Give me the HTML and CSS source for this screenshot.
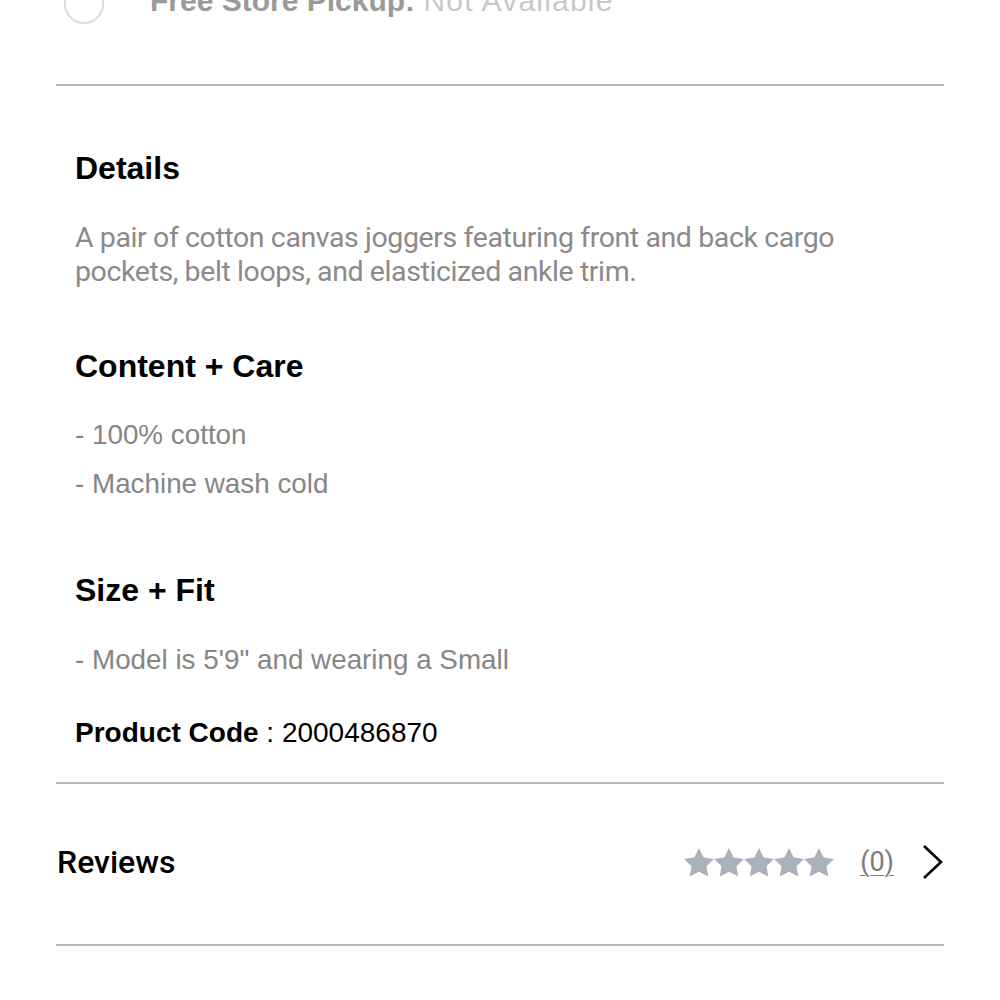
FILE: index.html
```html
<!DOCTYPE html>
<html lang="en">
<head>
<meta charset="utf-8">
<title>Product details</title>
<link rel="stylesheet" href="styles.css">
</head>
<body>
<div class="page">
  <div class="pickup">
    <span class="radio"></span>
    <span class="pickup-text"><b>Free Store Pickup:</b> <span class="na">Not Available</span></span>
  </div>
  <div class="rule rule-top"></div>

  <section class="details">
    <h2 class="heading h-details">Details</h2>
    <p class="desc">A pair of cotton canvas joggers featuring front and back cargo pockets, belt loops, and elasticized ankle trim.</p>

    <h2 class="heading h-care">Content + Care</h2>
    <ul class="bullets b-care">
      <li>- 100% cotton</li>
      <li>- Machine wash cold</li>
    </ul>

    <h2 class="heading h-fit">Size + Fit</h2>
    <ul class="bullets b-fit">
      <li>- Model is 5'9" and wearing a Small</li>
    </ul>

    <p class="code"><b>Product Code</b> : 2000486870</p>
  </section>
  <div class="rule rule-mid"></div>

  <div class="reviews">
    <span class="reviews-title">Reviews</span>
    <div class="reviews-right">
      <span class="stars">
        <svg class="star" viewBox="2 2 20 19.3" preserveAspectRatio="none"><path d="M12 2l3.09 6.26L22 9.27l-5 4.87 1.18 6.88L12 17.77l-6.18 3.25L7 14.14 2 9.27l6.91-1.01L12 2z"/></svg>
        <svg class="star" viewBox="2 2 20 19.3" preserveAspectRatio="none"><path d="M12 2l3.09 6.26L22 9.27l-5 4.87 1.18 6.88L12 17.77l-6.18 3.25L7 14.14 2 9.27l6.91-1.01L12 2z"/></svg>
        <svg class="star" viewBox="2 2 20 19.3" preserveAspectRatio="none"><path d="M12 2l3.09 6.26L22 9.27l-5 4.87 1.18 6.88L12 17.77l-6.18 3.25L7 14.14 2 9.27l6.91-1.01L12 2z"/></svg>
        <svg class="star" viewBox="2 2 20 19.3" preserveAspectRatio="none"><path d="M12 2l3.09 6.26L22 9.27l-5 4.87 1.18 6.88L12 17.77l-6.18 3.25L7 14.14 2 9.27l6.91-1.01L12 2z"/></svg>
        <svg class="star" viewBox="2 2 20 19.3" preserveAspectRatio="none"><path d="M12 2l3.09 6.26L22 9.27l-5 4.87 1.18 6.88L12 17.77l-6.18 3.25L7 14.14 2 9.27l6.91-1.01L12 2z"/></svg>
      </span>
      <span class="count">(0)</span>
      <svg class="chevron" viewBox="0 0 22 36"><polyline points="2,2 19,18 2,34"/></svg>
    </div>
  </div>
  <div class="rule rule-bottom"></div>
</div>
</body>
</html>
```

FILE: styles.css
```css
html, body {
  margin: 0;
  padding: 0;
  background: #ffffff;
}

body {
  font-family: "Liberation Sans", Arial, sans-serif;
  color: #000;
  overflow: hidden;
}

.page {
  width: 1000px;
}

.pickup {
  display: flex;
  align-items: center;
  gap: 46px;
  height: 40px;
  margin-top: -16px;
  padding-left: 64px;
}

.radio {
  box-sizing: border-box;
  width: 40px;
  height: 40px;
  border: 2px solid #dcdcdc;
  border-radius: 50%;
  flex: none;
}

.pickup-text {
  font-size: 30px;
  line-height: 40px;
  color: #9a9a9a;
  white-space: nowrap;
  position: relative;
  top: -3px;
}

.pickup-text .na {
  color: #c8c8c8;
  letter-spacing: 1.2px;
}

.rule {
  height: 2px;
  margin: 0 56px;
  background: #b3b8bf;
}

.rule-top {
  margin-top: 60px;
}

.details {
  padding: 0 75px;
}

.heading {
  margin: 0;
  font-size: 32px;
  line-height: 40px;
  font-weight: 700;
}

.h-details {
  margin-top: 62px;
}

.desc {
  margin: 33px 0 0;
  font-family: Roboto, "Liberation Sans", sans-serif;
  font-size: 28.5px;
  letter-spacing: -0.4px;
  line-height: 34px;
  color: #8a8a8a;
  max-width: 790px;
}

.h-care {
  margin-top: 57px;
}

.bullets {
  list-style: none;
  margin: 0;
  padding: 0;
  font-size: 27.8px;
  line-height: 49px;
  color: #868686;
}

.b-care {
  margin-top: 24px;
}

.h-fit {
  margin-top: 62px;
}

.b-fit {
  margin-top: 25px;
}

.code {
  margin: 29px 0 0;
  font-size: 28px;
  line-height: 40px;
  color: #000;
}

.rule-mid {
  margin-top: 29px;
}

.reviews {
  display: flex;
  align-items: center;
  justify-content: space-between;
  height: 80px;
  margin: 38px 56px 0 57px;
}

.reviews-title {
  font-family: Roboto, "Liberation Sans", sans-serif;
  font-weight: 500;
  font-size: 32px;
  line-height: 40px;
}

.reviews-right {
  display: flex;
  align-items: center;
}

.stars {
  display: flex;
}

.star {
  width: 30px;
  height: 29px;
  fill: #a9b1ba;
  display: block;
}

.count {
  margin-left: 26px;
  font-family: Roboto, "Liberation Sans", sans-serif;
  font-size: 27px;
  color: #7c7c7c;
  text-decoration: underline;
  text-underline-offset: 4px;
  text-decoration-thickness: 1px;
}

.chevron {
  width: 22px;
  height: 36px;
  margin-left: 28px;
  display: block;
  fill: none;
  stroke: #000;
  stroke-width: 2.6;
}

.rule-bottom {
  margin-top: 42px;
}
```
